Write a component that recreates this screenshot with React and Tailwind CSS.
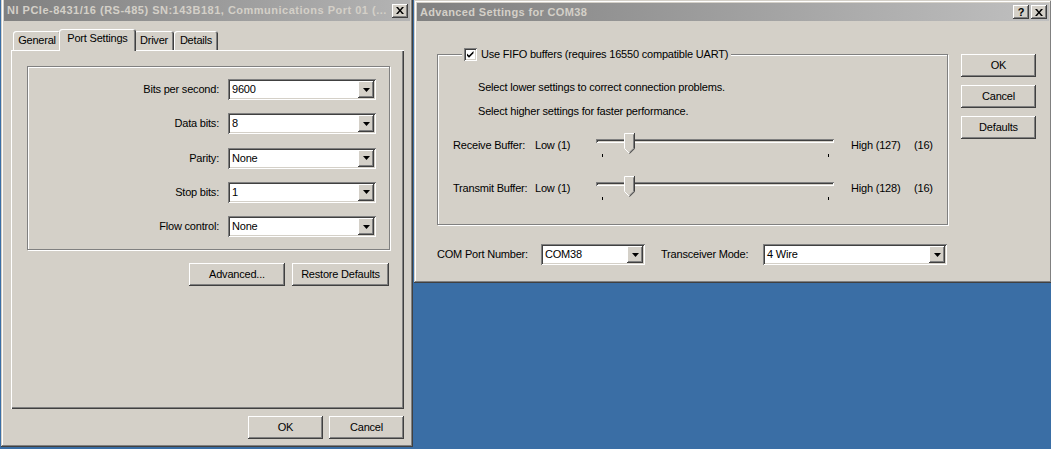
import React from "react";

// classic 3D bevels
const RAISED_WIN =
  "shadow-[inset_-1px_-1px_0_#404040,inset_1px_1px_0_#d4d0c8,inset_-2px_-2px_0_#808080,inset_2px_2px_0_#ffffff]";
const BUTTON =
  "shadow-[inset_-1px_-1px_0_#404040,inset_1px_1px_0_#ffffff,inset_-2px_-2px_0_#808080,inset_2px_2px_0_#d4d0c8]";
const SUNKEN =
  "shadow-[inset_1px_1px_0_#808080,inset_-1px_-1px_0_#ffffff,inset_2px_2px_0_#404040,inset_-2px_-2px_0_#d4d0c8]";
const PANEL =
  "shadow-[inset_1px_1px_0_#ffffff,inset_-1px_-1px_0_#404040,inset_-2px_-2px_0_#808080]";
const TAB =
  "shadow-[inset_1px_1px_0_#ffffff,inset_-1px_0_0_#404040,inset_-2px_0_0_#808080]";
const ETCHED =
  "border border-[#808080] shadow-[1px_1px_0_#ffffff,inset_1px_1px_0_#ffffff]";

function Button({ children, className = "" }) {
  return (
    <div className={`flex items-center justify-center h-[23px] bg-[#d4d0c8] ${BUTTON} ${className}`}>
      {children}
    </div>
  );
}

function CloseGlyph() {
  return (
    <svg width="8" height="7" viewBox="0 0 8 7">
      <path d="M0 0h2l2 2.4L6 0h2L5 3.5 8 7H6L4 4.6 2 7H0l3-3.5z" fill="#000" />
    </svg>
  );
}

function TitleButton({ children }) {
  return (
    <div className={`flex items-center justify-center w-[16px] h-[14px] bg-[#d4d0c8] ${BUTTON}`}>
      {children}
    </div>
  );
}

function Combo({ value, className = "" }) {
  return (
    <div className={`flex h-[21px] p-[2px] bg-white ${SUNKEN} ${className}`}>
      <span className="flex-1 pl-[2px] leading-[17px] whitespace-nowrap overflow-hidden">{value}</span>
      <div className={`flex items-center justify-center w-[16px] h-[17px] bg-[#d4d0c8] ${BUTTON}`}>
        <svg width="7" height="4" viewBox="0 0 7 4">
          <path d="M0 0h7L3.5 4z" fill="#000" />
        </svg>
      </div>
    </div>
  );
}

function Slider() {
  return (
    <div className="relative w-[238px] h-[28px]">
      <div className={`mt-[6px] h-[4px] bg-[#d4d0c8] ${SUNKEN}`} />
      <svg className="absolute left-[28px] top-0" width="11" height="21" viewBox="0 0 11 21">
        <path d="M0 0h11v15.5L5.5 21 0 15.5z" fill="#d4d0c8" />
        <path d="M0.5 15.5V0.5h9.5" stroke="#fff" fill="none" />
        <path d="M0.5 15.5l5 5" stroke="#fff" fill="none" />
        <path d="M10.5 0v15.7l-5 5" stroke="#404040" fill="none" />
        <path d="M9.5 1.5v13.8l-4 4" stroke="#808080" fill="none" />
      </svg>
      <div className="absolute left-[6px] top-[21px] w-px h-[3px] bg-black" />
      <div className="absolute left-[232px] top-[21px] w-px h-[3px] bg-black" />
    </div>
  );
}

function SliderRow({ label, high }) {
  return (
    <div className="flex h-[28px]">
      <span className="w-[82px] pt-[6px]">{label}</span>
      <span className="w-[61px] pt-[6px]">Low (1)</span>
      <Slider />
      <span className="ml-[17px] w-[63px] pt-[6px]">{high}</span>
      <span className="pt-[6px]">(16)</span>
    </div>
  );
}

function Tab({ label, className = "" }) {
  return (
    <div className={`flex justify-center pt-[3px] h-[19px] bg-[#d4d0c8] rounded-t-[3px] ${TAB} ${className}`}>
      {label}
    </div>
  );
}

const ROWS = [
  ["Bits per second:", "9600"],
  ["Data bits:", "8"],
  ["Parity:", "None"],
  ["Stop bits:", "1"],
  ["Flow control:", "None"],
];

function PortWindow() {
  return (
    <div className={`absolute left-[1px] top-[-3px] w-[412px] h-[450px] p-[3px] flex flex-col bg-[#d4d0c8] ${RAISED_WIN}`}>
      {/* title bar */}
      <div className="flex items-center h-[21px] pl-[3px] pr-[2px] bg-linear-to-r from-[#808080] to-[#b4b4b4]">
        <span className="flex-1 overflow-hidden whitespace-nowrap font-bold text-[#d4d0c8] tracking-[0.5px]">
          NI PCIe-8431/16 (RS-485) SN:143B181, Communications Port 01 (...
        </span>
        <TitleButton>
          <CloseGlyph />
        </TitleButton>
      </div>

      <div className="flex flex-col pl-[7px] pr-[6px] pt-[8px]">
        {/* tabs */}
        <div className="relative z-10 flex items-end h-[21px] pl-[2px]">
          <Tab label="General" className="w-[48px]" />
          <div className={`relative z-10 -mx-[2px] -mb-px flex justify-center pt-[3px] w-[77px] h-[22px] bg-[#d4d0c8] rounded-t-[3px] ${TAB}`}>
            Port Settings
          </div>
          <Tab label="Driver" className="w-[40px]" />
          <Tab label="Details" className="w-[44px]" />
        </div>

        {/* tab page */}
        <div className={`h-[359px] pt-[16px] pl-[16px] ${PANEL}`}>
          <div className={`w-[363px] h-[184px] flex flex-col gap-[13.25px] pt-[12px] ${ETCHED}`}>
            {ROWS.map(([label, value]) => (
              <div key={label} className="flex items-center gap-[9px]">
                <span className="w-[191px] text-right">{label}</span>
                <Combo value={value} className="w-[148px]" />
              </div>
            ))}
          </div>
          <div className="w-[363px] mt-[13px] pr-[1px] flex justify-end gap-[7px]">
            <Button className="w-[96px]">Advanced...</Button>
            <Button className="w-[97px]">Restore Defaults</Button>
          </div>
        </div>

        <div className="mt-[7px] flex justify-end gap-[6px]">
          <Button className="w-[75px]">OK</Button>
          <Button className="w-[75px]">Cancel</Button>
        </div>
      </div>
    </div>
  );
}

function AdvancedWindow() {
  return (
    <div className={`absolute left-[414px] top-0 w-[638px] h-[283px] p-[3px] flex flex-col bg-[#d4d0c8] ${RAISED_WIN}`}>
      {/* title bar */}
      <div className="flex items-center h-[18px] pl-[3px] pr-[2px] gap-[2px] bg-linear-to-r from-[#808080] to-[#c0c0c0]">
        <span className="flex-1 whitespace-nowrap font-bold text-[#d4d0c8] tracking-[0.35px]">
          Advanced Settings for COM38
        </span>
        <TitleButton>
          <span className="font-bold text-[11px] leading-none">?</span>
        </TitleButton>
        <TitleButton>
          <CloseGlyph />
        </TitleButton>
      </div>

      <div className="flex pl-[20px] pt-[33px] gap-[13px]">
        {/* FIFO group */}
        <div className={`relative w-[511px] h-[171px] flex flex-col pt-[26px] ${ETCHED}`}>
          <div className="absolute left-[24px] top-[-7px] flex items-center gap-[4px] px-[2px] pr-[3px] bg-[#d4d0c8]">
            <div className={`flex items-center justify-center w-[13px] h-[13px] bg-white ${SUNKEN}`}>
              <svg width="7" height="7" viewBox="0 0 7 7">
                <path d="M0 2.5l2 2L6.5 0v2.2L2 6.8 0 4.8z" fill="#000" />
              </svg>
            </div>
            <span className="leading-[13px]">Use FIFO buffers (requires 16550 compatible UART)</span>
          </div>

          <p className="pl-[40px] leading-[13px]">Select lower settings to correct connection problems.</p>
          <p className="pl-[40px] mt-[11px] leading-[13px]">Select higher settings for faster performance.</p>

          <div className="pl-[15px] mt-[15px] flex flex-col gap-[15px]">
            <SliderRow label="Receive Buffer:" high="High (127)" />
            <SliderRow label="Transmit Buffer:" high="High (128)" />
          </div>
        </div>

        <div className="flex flex-col gap-[8px]">
          <Button className="w-[75px]">OK</Button>
          <Button className="w-[75px]">Cancel</Button>
          <Button className="w-[75px]">Defaults</Button>
        </div>
      </div>

      <div className="flex items-center mt-[19px] pl-[20px]">
        <span className="w-[104px]">COM Port Number:</span>
        <Combo value="COM38" className="w-[104px]" />
        <span className="ml-[16px] w-[102px]">Transceiver Mode:</span>
        <Combo value="4 Wire" className="w-[184px]" />
      </div>
    </div>
  );
}

export default function App() {
  return (
    <div className="relative w-[1051px] h-[449px] overflow-hidden bg-[#3a6ea5] text-[11px] leading-[13px] text-black tracking-[-0.2px] font-['Liberation_Sans',Arial,sans-serif]">
      <PortWindow />
      <AdvancedWindow />
    </div>
  );
}
